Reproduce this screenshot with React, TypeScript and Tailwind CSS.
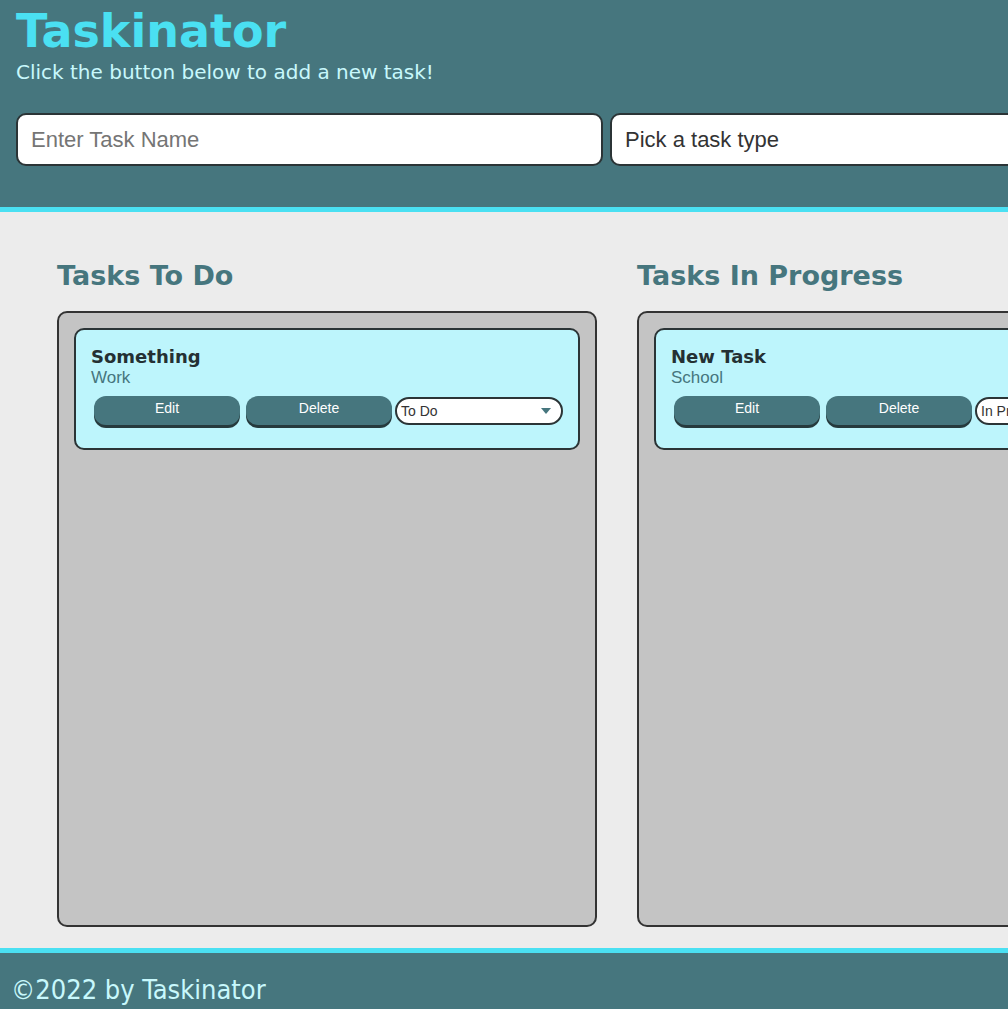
import React from "react";

const verdana = { fontFamily: '"DejaVu Sans", Verdana, sans-serif' };

function Card({ name, type, status }: { name: string; type: string; status: string }) {
  return (
    <div className="mx-[15px] mt-[15px] rounded-[10px] border-2 border-[#2b3436] bg-[#bdf5fc] px-[15px] pt-[16px] pb-[23px]">
      <div className="text-[18px] font-bold leading-[22px] text-[#243033]" style={verdana}>{name}</div>
      <div className="text-[17px] leading-[19px] text-[#46767e]" style={{ fontFamily: '"Liberation Sans", Arial, sans-serif' }}>{type}</div>
      <div className="mt-[8px] flex items-center pl-[3px]" style={{ fontFamily: '"Liberation Sans", Arial, sans-serif' }}>
        <button className="h-[29px] w-[146px] shrink-0 rounded-[12px] bg-[#46767e] pb-[3px] text-[14px] text-white shadow-[0_3px_0_#263a3d]">Edit</button>
        <button className="ml-[6px] h-[29px] w-[146px] shrink-0 rounded-[12px] bg-[#46767e] pb-[3px] text-[14px] text-white shadow-[0_3px_0_#263a3d]">Delete</button>
        <div className="relative mt-[2px] ml-[3px] flex h-[28px] w-[168px] shrink-0 items-center rounded-full border-2 border-[#2b3436] bg-white pl-[4px] text-[14px] text-[#333]">
          <span className="whitespace-nowrap">{status}</span>
          <svg className="absolute right-[10px] top-[9px]" width="10" height="6" viewBox="0 0 10 6">
            <path d="M0 0 L10 0 L5 6 Z" fill="#46767e" />
          </svg>
        </div>
      </div>
    </div>
  );
}

function Column({ title, children }: { title: string; children?: React.ReactNode }) {
  return (
    <div className="flex w-[540px] shrink-0 flex-col">
      <h2 className="pt-[1px] text-[27px] font-bold leading-[32px] text-[#46767e]" style={verdana}>{title}</h2>
      <div className="mt-[19px] h-[616px] rounded-[10px] border-2 border-[#333] bg-[#c4c4c4]">{children}</div>
    </div>
  );
}

export default function App() {
  return (
    <div className="w-[1008px] overflow-hidden bg-[#ececec]">
      <header className="border-b-[5px] border-[#4ae0f2] bg-[#46767e] px-4 pb-[41px]">
        <h1 className="pt-[4px] text-[46px] font-bold leading-[54px] text-[#4ae0f2]" style={verdana}>Taskinator</h1>
        <p className="mt-[2px] text-[20px] leading-[24px] text-[#c8f8fc]" style={verdana}>Click the button below to add a new task!</p>
        <div className="mt-[29px] flex gap-[7px]">
          <input
            placeholder="Enter Task Name"
            className="h-[53px] w-[587px] shrink-0 rounded-[10px] border-2 border-[#2b3436] bg-white px-[13px] text-[22px] text-[#333] placeholder:text-[#757575] outline-none"
            style={{ fontFamily: '"Liberation Sans", Arial, sans-serif' }}
          />
          <div
            className="flex h-[53px] w-[587px] shrink-0 items-center rounded-[10px] border-2 border-[#2b3436] bg-white px-[13px] text-[22px] text-[#333]"
            style={{ fontFamily: '"Liberation Sans", Arial, sans-serif' }}
          >
            Pick a task type
          </div>
        </div>
      </header>
      <main className="flex gap-[40px] pl-[57px] pt-[47px] pb-[21px]">
        <Column title="Tasks To Do">
          <Card name="Something" type="Work" status="To Do" />
        </Column>
        <Column title="Tasks In Progress">
          <Card name="New Task" type="School" status="In Progress" />
        </Column>
        <Column title="Tasks Completed" />
      </main>
      <footer className="h-[61px] border-t-[5px] border-[#4ae0f2] bg-[#46767e] px-[11px] pt-[21px]">
        <p className="text-[27px] leading-[32px] text-[#c8f8fc]" style={{ fontFamily: '"DejaVu Sans Condensed", "DejaVu Sans", sans-serif' }}>©2022 by Taskinator</p>
      </footer>
    </div>
  );
}
